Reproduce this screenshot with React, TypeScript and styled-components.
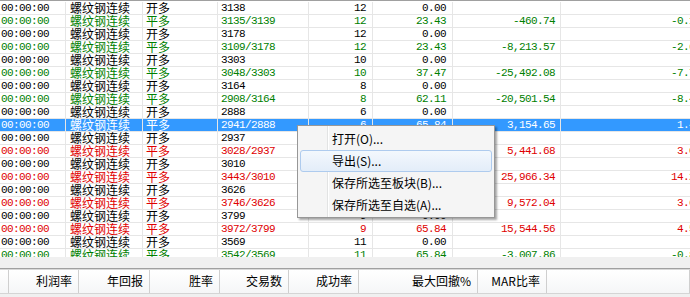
import React from 'react';
import styled, { createGlobalStyle, css } from 'styled-components';

const GlobalStyle = createGlobalStyle`
    html,
    body {
        margin: 0;
        padding: 0;
        background: #fff;
    }
    body {
        width: 690px;
        height: 297px;
        overflow: hidden;
    }
`;

type Tone = 'black' | 'green' | 'red';
type Kind = 'num' | 'cjk';

const TONES: Record<Tone, string> = {
    black: '#000000',
    green: '#008000',
    red: '#e00000',
};

const CJK_FONT = `"Noto Sans CJK SC", "Noto Sans", sans-serif`;
const NUM_FONT = `"Liberation Mono", "DejaVu Sans Mono", monospace`;

const Screen = styled.div`
    position: relative;
    display: flex;
    flex-direction: column;
    width: 690px;
    height: 297px;
    overflow: hidden;
    background: #fff;
`;

const TopRule = styled.div`
    flex: none;
    height: 1px;
    border-top: 1px solid #a0a0a0;
    background: #fff;
`;

const Grid = styled.div`
    flex: none;
    height: 255px;
    overflow: hidden;
`;

const Row = styled.div<{ $tone: Tone; $selected?: boolean }>`
    display: grid;
    grid-template-columns: 66px 77px 75px 91px 64px 80px 108px 153px;
    height: 13px;
    box-sizing: border-box;
    border-bottom: 1px solid #e6e6e6;
    color: ${props => TONES[props.$tone]};

    ${props =>
        props.$selected &&
        css`
            background: #3399ff;
            color: #fff;
        `}
`;

const Cell = styled.div<{ $kind: Kind; $align: 'left' | 'right'; $pad: number }>`
    box-sizing: border-box;
    border-right: 1px solid #e6e6e6;
    white-space: nowrap;
    line-height: 12px;
    text-align: ${props => props.$align};
    padding-left: ${props => (props.$align === 'left' ? props.$pad : 0)}px;
    padding-right: ${props => (props.$align === 'right' ? props.$pad : 0)}px;
    font-family: ${props => (props.$kind === 'num' ? NUM_FONT : CJK_FONT)};
    font-size: ${props => (props.$kind === 'num' ? '11px' : '12px')};
    letter-spacing: ${props => (props.$kind === 'num' ? '-0.6px' : '0')};
`;

const Gap = styled.div`
    flex: none;
    height: 11px;
    background: #f0f0f0;
`;

const SplitRule = styled.div`
    flex: none;
    height: 1px;
    border-top: 1px solid #a0a0a0;
    background: #d8d8d8;
`;

const HeaderBar = styled.div`
    flex: none;
    display: flex;
    height: 23px;
    background: linear-gradient(#ffffff, #f5f6f7);
`;

const HeaderCell = styled.div<{ $width?: number }>`
    box-sizing: border-box;
    flex: ${props => (props.$width ? `0 0 ${props.$width}px` : '1 1 auto')};
    border-right: 1px solid #cfcfcf;
    padding-right: 6px;
    text-align: right;
    font-family: ${CJK_FONT};
    font-size: 12px;
    line-height: 22px;
    color: #000;
    white-space: nowrap;
`;

const BottomStrip = styled.div`
    flex: 1;
    border-top: 1px solid #d5d5d5;
    background: #f0f0f0;
`;

const Menu = styled.div`
    position: absolute;
    left: 297px;
    top: 125px;
    width: 198px;
    box-sizing: border-box;
    padding: 2px 2px 1px;
    border: 1px solid #979797;
    background: linear-gradient(
        to right,
        #f5f5f5 29px,
        #e2e3e3 29px,
        #e2e3e3 30px,
        #ffffff 30px,
        #ffffff 31px,
        #f5f5f5 31px
    );
    box-shadow: 2px 2px 2px rgba(0, 0, 0, 0.35);
`;

const MenuItem = styled.div<{ $active?: boolean }>`
    height: 22px;
    box-sizing: border-box;
    padding-left: 31px;
    border: 1px solid transparent;
    border-radius: 3px;
    font-family: ${CJK_FONT};
    font-size: 12px;
    line-height: 20px;
    color: #000;

    ${props =>
        props.$active &&
        css`
            border-color: #aecbee;
            background: linear-gradient(#f3f8fd, #e3edf9);
        `}
`;

interface Trade {
    time: string;
    name: string;
    dir: string;
    price: string;
    count: string;
    pct: string;
    pnl: string;
    ratio: string;
    tone: Tone;
    selected?: boolean;
}

interface Column {
    key: 'time' | 'name' | 'dir' | 'price' | 'count' | 'pct' | 'pnl' | 'ratio';
    kind: Kind;
    align: 'left' | 'right';
    pad: number;
}

const COLUMNS: Column[] = [
    { key: 'time', kind: 'num', align: 'left', pad: 1 },
    { key: 'name', kind: 'cjk', align: 'left', pad: 4 },
    { key: 'dir', kind: 'cjk', align: 'left', pad: 3 },
    { key: 'price', kind: 'num', align: 'left', pad: 3 },
    { key: 'count', kind: 'num', align: 'right', pad: 6 },
    { key: 'pct', kind: 'num', align: 'right', pad: 6 },
    { key: 'pnl', kind: 'num', align: 'right', pad: 5 },
    { key: 'ratio', kind: 'num', align: 'right', pad: 6 },
];

const open = (price: string, count: string): Trade => ({
    time: '00:00:00',
    name: '螺纹钢连续',
    dir: '开多',
    price,
    count,
    pct: '0.00',
    pnl: '',
    ratio: '',
    tone: 'black',
});

const close = (tone: Tone, price: string, count: string, pct: string, pnl: string, ratio: string): Trade => ({
    time: '00:00:00',
    name: '螺纹钢连续',
    dir: '平多',
    price,
    count,
    pct,
    pnl,
    ratio,
    tone,
});

const TRADES: Trade[] = [
    open('3138', '12'),
    close('green', '3135/3139', '12', '23.43', '-460.74', '-0.15%'),
    open('3178', '12'),
    close('green', '3109/3178', '12', '23.43', '-8,213.57', '-2.62%'),
    open('3303', '10'),
    close('green', '3048/3303', '10', '37.47', '-25,492.08', '-7.72%'),
    open('3164', '8'),
    close('green', '2908/3164', '8', '62.11', '-20,501.54', '-8.48%'),
    open('2888', '6'),
    { ...close('black', '2941/2888', '6', '65.84', '3,154.65', '1.42%'), selected: true },
    open('2937', '6'),
    close('red', '3028/2937', '6', '65.84', '5,441.68', '3.09%'),
    open('3010', '7'),
    close('red', '3443/3010', '7', '65.84', '25,966.34', '14.26%'),
    open('3626', '8'),
    close('red', '3746/3626', '8', '65.84', '9,572.04', '3.61%'),
    open('3799', '9'),
    close('red', '3972/3799', '9', '65.84', '15,544.56', '4.55%'),
    open('3569', '11'),
    close('green', '3542/3569', '11', '65.84', '-3,007.86', '-0.81%'),
];

const SUMMARY: { label: string; width?: number }[] = [
    { label: '', width: 9 },
    { label: '利润率', width: 70 },
    { label: '年回报', width: 71 },
    { label: '胜率', width: 70 },
    { label: '交易数', width: 69 },
    { label: '成功率', width: 70 },
    { label: '最大回撤%', width: 119 },
    { label: 'MAR比率', width: 69 },
    { label: '' },
];

const MENU = ['打开(O)...', '导出(S)...', '保存所选至板块(B)...', '保存所选至自选(A)...'];

const App = () => (
    <Screen>
        <GlobalStyle />
        <TopRule />
        <Grid>
            {TRADES.map((t, i) => (
                <Row key={i} $tone={t.tone} $selected={t.selected}>
                    {COLUMNS.map(c => (
                        <Cell key={c.key} $kind={c.kind} $align={c.align} $pad={c.pad}>
                            {t[c.key]}
                        </Cell>
                    ))}
                </Row>
            ))}
        </Grid>
        <Gap />
        <SplitRule />
        <HeaderBar>
            {SUMMARY.map((h, i) => (
                <HeaderCell key={i} $width={h.width}>
                    {h.label}
                </HeaderCell>
            ))}
        </HeaderBar>
        <BottomStrip />
        <Menu>
            {MENU.map((label, i) => (
                <MenuItem key={label} $active={i === 1}>
                    {label}
                </MenuItem>
            ))}
        </Menu>
    </Screen>
);

export default App;
